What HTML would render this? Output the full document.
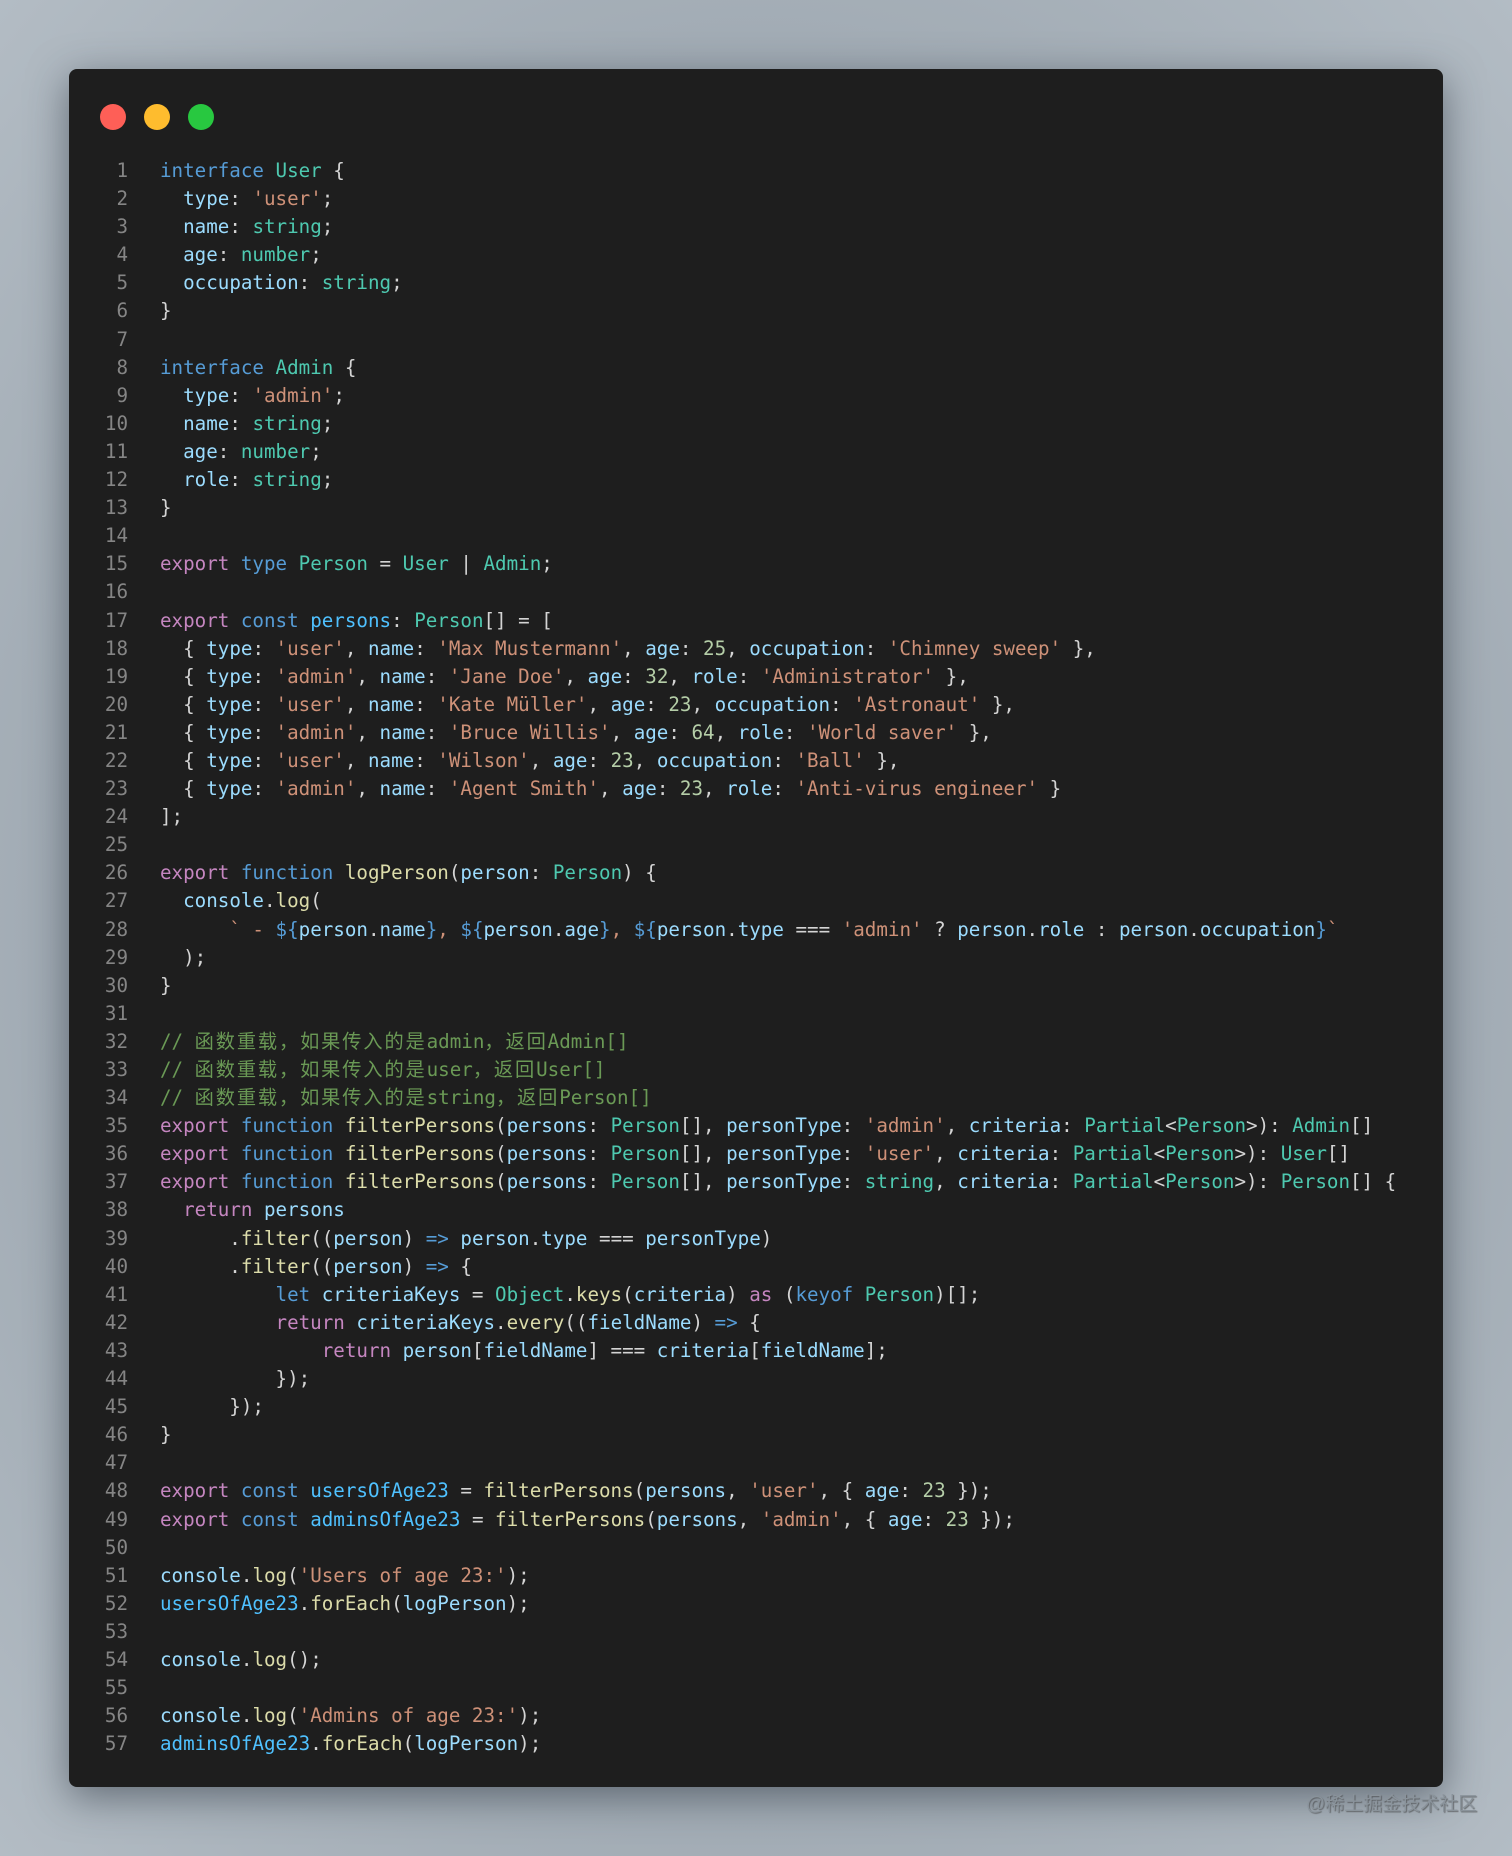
<!DOCTYPE html>
<html><head><meta charset="utf-8"><style>
html,body{margin:0;padding:0;}
body{width:1512px;height:1856px;background:radial-gradient(ellipse at 50% 50%,#8f99a2 0%,#9ea8b1 60%,#b3bcc4 100%);position:relative;overflow:hidden;font-family:"Liberation Mono","Noto Sans CJK SC",monospace;}
.win{position:absolute;left:69px;top:69px;width:1374px;height:1718px;background:#1e1e1e;border-radius:8px;box-shadow:0 10px 40px rgba(40,50,60,.55);}
.dot{position:absolute;top:104px;width:26px;height:26px;border-radius:50%;}
.code{position:absolute;left:0;top:157px;margin:0;font-size:19.2px;line-height:28.09px;color:#d4d4d4;white-space:pre;}
.ln{position:absolute;left:0;width:128px;top:157px;margin:0;font-size:19.2px;line-height:28.09px;color:#858585;text-align:right;white-space:pre;}
.k{color:#569cd6}.e{color:#c586c0}.t{color:#4ec9b0}.s{color:#ce9178}.p{color:#9cdcfe}.f{color:#dcdcaa}.c{color:#6a9955}.n{color:#b5cea8}.v{color:#4fc1ff}
.z{letter-spacing:1.9px}
.wm{position:absolute;left:1306px;top:1789px;font-family:"Liberation Sans","Noto Sans CJK SC",sans-serif;font-size:19px;color:#8a939b;text-shadow:1px 1px 1px rgba(60,60,60,.6);}
</style></head><body>
<div class="win"></div>
<div style="position:absolute;left:0;top:0;z-index:1">
<div class="dot" style="left:100px;background:#fe5f57"></div>
<div class="dot" style="left:144px;background:#febc2e"></div>
<div class="dot" style="left:188px;background:#28c840"></div>
<pre class="ln">1
2
3
4
5
6
7
8
9
10
11
12
13
14
15
16
17
18
19
20
21
22
23
24
25
26
27
28
29
30
31
32
33
34
35
36
37
38
39
40
41
42
43
44
45
46
47
48
49
50
51
52
53
54
55
56
57</pre>
<pre class="code" style="left:160px"><span class="k">interface</span> <span class="t">User</span> {
  <span class="p">type</span>: <span class="s">'user'</span>;
  <span class="p">name</span>: <span class="t">string</span>;
  <span class="p">age</span>: <span class="t">number</span>;
  <span class="p">occupation</span>: <span class="t">string</span>;
}

<span class="k">interface</span> <span class="t">Admin</span> {
  <span class="p">type</span>: <span class="s">'admin'</span>;
  <span class="p">name</span>: <span class="t">string</span>;
  <span class="p">age</span>: <span class="t">number</span>;
  <span class="p">role</span>: <span class="t">string</span>;
}

<span class="e">export</span> <span class="k">type</span> <span class="t">Person</span> = <span class="t">User</span> | <span class="t">Admin</span>;

<span class="e">export</span> <span class="k">const</span> <span class="v">persons</span>: <span class="t">Person</span>[] = [
  { <span class="p">type</span>: <span class="s">'user'</span>, <span class="p">name</span>: <span class="s">'Max Mustermann'</span>, <span class="p">age</span>: <span class="n">25</span>, <span class="p">occupation</span>: <span class="s">'Chimney sweep'</span> },
  { <span class="p">type</span>: <span class="s">'admin'</span>, <span class="p">name</span>: <span class="s">'Jane Doe'</span>, <span class="p">age</span>: <span class="n">32</span>, <span class="p">role</span>: <span class="s">'Administrator'</span> },
  { <span class="p">type</span>: <span class="s">'user'</span>, <span class="p">name</span>: <span class="s">'Kate Müller'</span>, <span class="p">age</span>: <span class="n">23</span>, <span class="p">occupation</span>: <span class="s">'Astronaut'</span> },
  { <span class="p">type</span>: <span class="s">'admin'</span>, <span class="p">name</span>: <span class="s">'Bruce Willis'</span>, <span class="p">age</span>: <span class="n">64</span>, <span class="p">role</span>: <span class="s">'World saver'</span> },
  { <span class="p">type</span>: <span class="s">'user'</span>, <span class="p">name</span>: <span class="s">'Wilson'</span>, <span class="p">age</span>: <span class="n">23</span>, <span class="p">occupation</span>: <span class="s">'Ball'</span> },
  { <span class="p">type</span>: <span class="s">'admin'</span>, <span class="p">name</span>: <span class="s">'Agent Smith'</span>, <span class="p">age</span>: <span class="n">23</span>, <span class="p">role</span>: <span class="s">'Anti-virus engineer'</span> }
];

<span class="e">export</span> <span class="k">function</span> <span class="f">logPerson</span>(<span class="p">person</span>: <span class="t">Person</span>) {
  <span class="p">console</span>.<span class="f">log</span>(
      <span class="s">` - </span><span class="k">${</span><span class="p">person</span>.<span class="p">name</span><span class="k">}</span><span class="s">, </span><span class="k">${</span><span class="p">person</span>.<span class="p">age</span><span class="k">}</span><span class="s">, </span><span class="k">${</span><span class="p">person</span>.<span class="p">type</span> === <span class="s">'admin'</span> ? <span class="p">person</span>.<span class="p">role</span> : <span class="p">person</span>.<span class="p">occupation</span><span class="k">}</span><span class="s">`</span>
  );
}

<span class="c">// <span class="z">函数重载，如果传入的是</span>admin<span class="z">，返回</span>Admin[]</span>
<span class="c">// <span class="z">函数重载，如果传入的是</span>user<span class="z">，返回</span>User[]</span>
<span class="c">// <span class="z">函数重载，如果传入的是</span>string<span class="z">，返回</span>Person[]</span>
<span class="e">export</span> <span class="k">function</span> <span class="f">filterPersons</span>(<span class="p">persons</span>: <span class="t">Person</span>[], <span class="p">personType</span>: <span class="s">'admin'</span>, <span class="p">criteria</span>: <span class="t">Partial</span>&lt;<span class="t">Person</span>&gt;): <span class="t">Admin</span>[]
<span class="e">export</span> <span class="k">function</span> <span class="f">filterPersons</span>(<span class="p">persons</span>: <span class="t">Person</span>[], <span class="p">personType</span>: <span class="s">'user'</span>, <span class="p">criteria</span>: <span class="t">Partial</span>&lt;<span class="t">Person</span>&gt;): <span class="t">User</span>[]
<span class="e">export</span> <span class="k">function</span> <span class="f">filterPersons</span>(<span class="p">persons</span>: <span class="t">Person</span>[], <span class="p">personType</span>: <span class="t">string</span>, <span class="p">criteria</span>: <span class="t">Partial</span>&lt;<span class="t">Person</span>&gt;): <span class="t">Person</span>[] {
  <span class="e">return</span> <span class="p">persons</span>
      .<span class="f">filter</span>((<span class="p">person</span>) <span class="k">=&gt;</span> <span class="p">person</span>.<span class="p">type</span> === <span class="p">personType</span>)
      .<span class="f">filter</span>((<span class="p">person</span>) <span class="k">=&gt;</span> {
          <span class="k">let</span> <span class="p">criteriaKeys</span> = <span class="t">Object</span>.<span class="f">keys</span>(<span class="p">criteria</span>) <span class="e">as</span> (<span class="k">keyof</span> <span class="t">Person</span>)[];
          <span class="e">return</span> <span class="p">criteriaKeys</span>.<span class="f">every</span>((<span class="p">fieldName</span>) <span class="k">=&gt;</span> {
              <span class="e">return</span> <span class="p">person</span>[<span class="p">fieldName</span>] === <span class="p">criteria</span>[<span class="p">fieldName</span>];
          });
      });
}

<span class="e">export</span> <span class="k">const</span> <span class="v">usersOfAge23</span> = <span class="f">filterPersons</span>(<span class="p">persons</span>, <span class="s">'user'</span>, { <span class="p">age</span>: <span class="n">23</span> });
<span class="e">export</span> <span class="k">const</span> <span class="v">adminsOfAge23</span> = <span class="f">filterPersons</span>(<span class="p">persons</span>, <span class="s">'admin'</span>, { <span class="p">age</span>: <span class="n">23</span> });

<span class="p">console</span>.<span class="f">log</span>(<span class="s">'Users of age 23:'</span>);
<span class="v">usersOfAge23</span>.<span class="f">forEach</span>(<span class="p">logPerson</span>);

<span class="p">console</span>.<span class="f">log</span>();

<span class="p">console</span>.<span class="f">log</span>(<span class="s">'Admins of age 23:'</span>);
<span class="v">adminsOfAge23</span>.<span class="f">forEach</span>(<span class="p">logPerson</span>);</pre>
</div>
<div class="wm">@稀土掘金技术社区</div>
</body></html>
